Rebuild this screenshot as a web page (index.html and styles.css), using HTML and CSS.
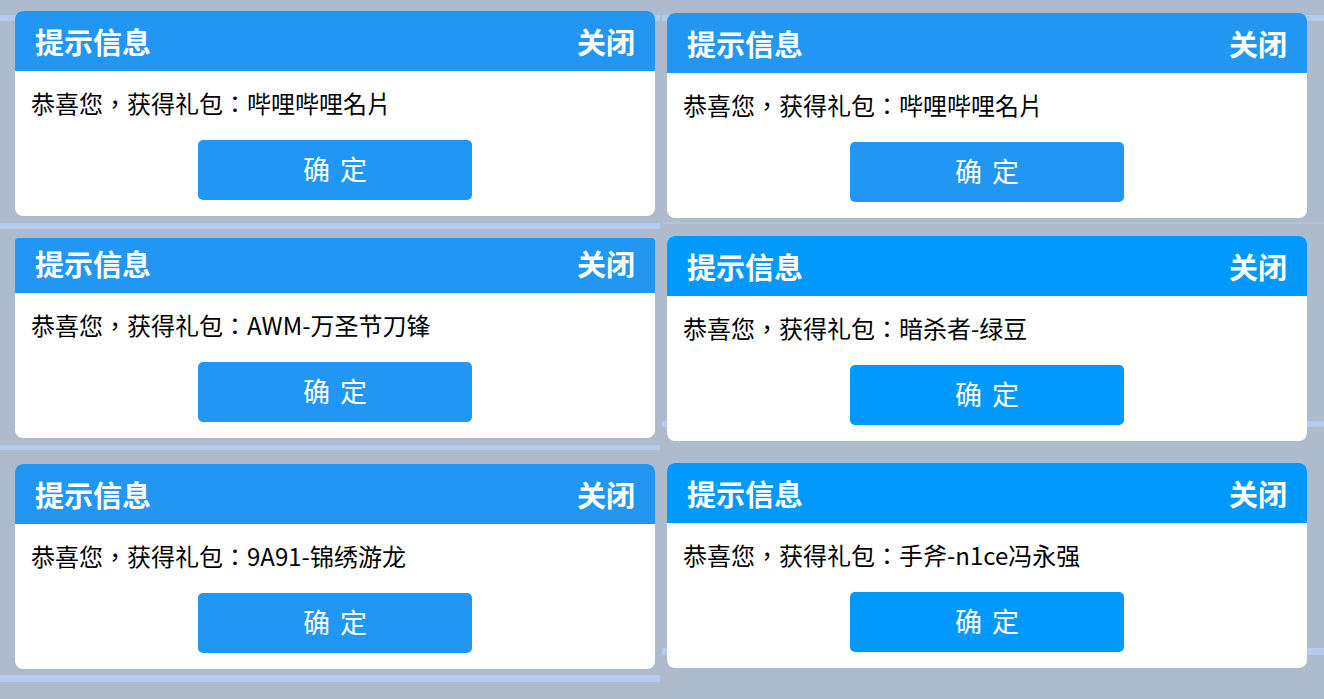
FILE: index.html
```html
<!DOCTYPE html>
<html lang="zh-CN">
<head>
    <meta charset="UTF-8">
    <title>提示信息</title>
    <link rel="stylesheet" href="styles.css">
</head>
<body>
    <div class="board">
        <div class="col col-left">
            <div class="dialog">
                <div class="dialog-head"><span>提示信息</span><span>关闭</span></div>
                <div class="dialog-body">
                    <p class="dialog-msg">恭喜您，获得礼包：哔哩哔哩名片</p>
                    <button class="dialog-btn">确 定</button>
                </div>
            </div>
            <div class="dialog is-cut">
                <div class="dialog-head"><span>提示信息</span><span>关闭</span></div>
                <div class="dialog-body">
                    <p class="dialog-msg">恭喜您，获得礼包：AWM-万圣节刀锋</p>
                    <button class="dialog-btn">确 定</button>
                </div>
            </div>
            <div class="dialog">
                <div class="dialog-head"><span>提示信息</span><span>关闭</span></div>
                <div class="dialog-body">
                    <p class="dialog-msg">恭喜您，获得礼包：9A91-锦绣游龙</p>
                    <button class="dialog-btn">确 定</button>
                </div>
            </div>
        </div>

        <div class="col col-right">
            <div class="dialog">
                <div class="dialog-head"><span>提示信息</span><span>关闭</span></div>
                <div class="dialog-body">
                    <p class="dialog-msg">恭喜您，获得礼包：哔哩哔哩名片</p>
                    <button class="dialog-btn">确 定</button>
                </div>
            </div>
            <div class="dialog bright">
                <div class="dialog-head"><span>提示信息</span><span>关闭</span></div>
                <div class="dialog-body">
                    <p class="dialog-msg">恭喜您，获得礼包：暗杀者-绿豆</p>
                    <button class="dialog-btn">确 定</button>
                </div>
            </div>
            <div class="dialog bright">
                <div class="dialog-head"><span>提示信息</span><span>关闭</span></div>
                <div class="dialog-body">
                    <p class="dialog-msg">恭喜您，获得礼包：手斧-n1ce冯永强</p>
                    <button class="dialog-btn">确 定</button>
                </div>
            </div>
        </div>
    </div>
</body>
</html>
```

FILE: styles.css
```css
body { margin: 0; width: 1324px; height: 699px; overflow: hidden; background: #aebbcd; font-family: "Noto Sans CJK SC", "Noto Sans", sans-serif; }
.board { display: flex; gap: 2px; height: 699px; }
.col { display: flex; flex-direction: column; height: 699px; background-repeat: no-repeat; }

/* light blue stripes of the backdrop */
.col-left {
    width: 660px; padding-top: 11px; box-sizing: border-box;
    background-image: linear-gradient(#b4cbee, #b4cbee), linear-gradient(#b4cbee, #b4cbee), linear-gradient(#b4cbee, #b4cbee), linear-gradient(#b4cbee, #b4cbee);
    background-size: 100% 6px, 100% 6px, 100% 5px, 100% 7px;
    background-position: 0 15px, 0 223px, 0 445px, 0 675px;
}
.col-right {
    width: 662px; padding-top: 13px; box-sizing: border-box;
    background-image: linear-gradient(#b4cbee, #b4cbee), linear-gradient(#b5c3d8, #b5c3d8), linear-gradient(#b4cbee, #b4cbee), linear-gradient(#b4cbee, #b4cbee);
    background-size: 100% 6px, 100% 2px, 100% 6px, 100% 7px;
    background-position: 0 15px, 0 222px, 0 421px, 0 648px;
}

.col-left .dialog { margin: 0 5px 0 15px; }
.col-right .dialog { margin: 0 17px 0 5px; }
.col-left .dialog + .dialog { margin-top: 22px; }
.col-left .dialog.is-cut + .dialog { margin-top: 26px; }
.col-right .dialog + .dialog { margin-top: 18px; }
.col-right .dialog + .dialog + .dialog { margin-top: 22px; }

.dialog { background: #fff; border-radius: 8px; overflow: hidden; height: 205px; flex: none; }
.dialog-head { height: 60px; box-sizing: border-box; padding: 0 20px; display: flex; justify-content: space-between; align-items: center; background: #2196f3; color: #fff; font-size: 29px; font-weight: bold; }
.dialog.is-cut { height: 200px; border-radius: 3px 3px 8px 8px; }
.dialog.is-cut .dialog-head { height: 55px; padding-bottom: 5px; }
.dialog-body { padding: 15px 16px 16px; }
.dialog-msg { margin: 0; font-family: "Noto Sans CJK TC", "Noto Sans CJK SC", sans-serif; font-feature-settings: "locl" 0; font-size: 24px; line-height: 34px; color: #000; white-space: nowrap; }
.dialog-btn { display: block; width: 274px; height: 60px; margin: 20px auto 0; padding: 0 0 3px 2px; border: none; border-radius: 5px; background: #2196f3; color: #fff; font-family: inherit; font-size: 27px; letter-spacing: 2px; }

.bright .dialog-head, .bright .dialog-btn { background: #0299fe; }
```
